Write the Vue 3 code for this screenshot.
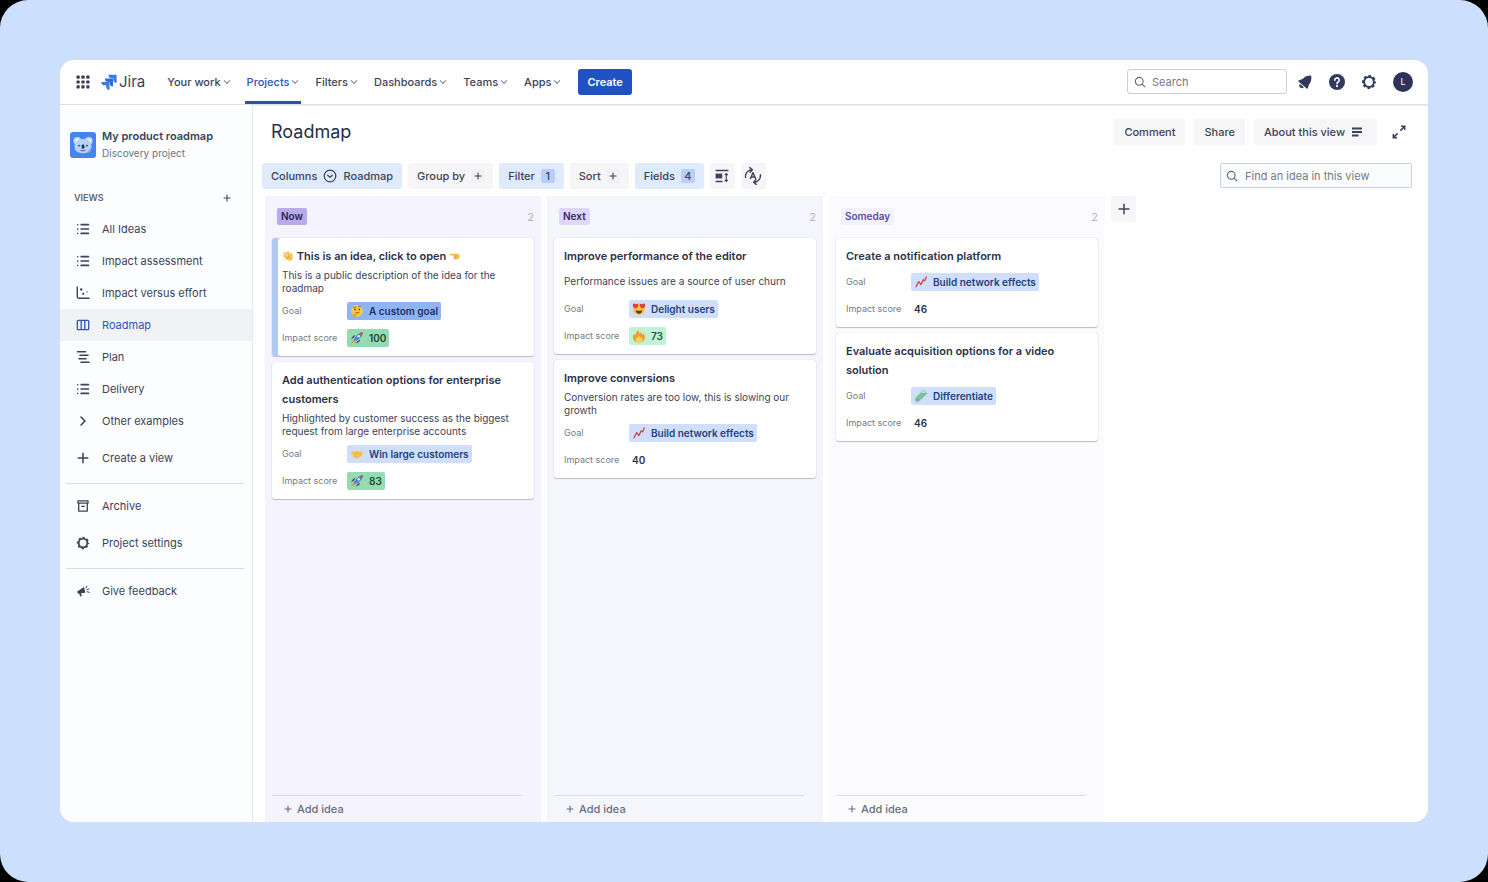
<script setup>
import { ref } from 'vue';

const search = ref('');
const ideaSearch = ref('');
const activeView = ref('Roadmap');

const navItems = ['Your work', 'Projects', 'Filters', 'Dashboards', 'Teams', 'Apps'];

const views = [
  { name: 'All Ideas', icon: 'list' },
  { name: 'Impact assessment', icon: 'list' },
  { name: 'Impact versus effort', icon: 'chart' },
  { name: 'Roadmap', icon: 'board' },
  { name: 'Plan', icon: 'plan' },
  { name: 'Delivery', icon: 'list' },
  { name: 'Other examples', icon: 'right' },
];

const columns = ref([
  {
    name: 'Now',
    tone: 'now',
    ideas: [
      {
        title: 'This is an idea, click to open',
        before: 'wave',
        after: 'point',
        selected: true,
        text: 'This is a public description of the idea for the roadmap',
        long: true,
        goal: { icon: 'think', name: 'A custom goal', tone: 'strong' },
        score: { icon: 'rocket', value: 100, tone: 'green' },
      },
      {
        title: 'Add authentication options for enterprise customers',
        text: 'Highlighted by customer success as the biggest request from large enterprise accounts',
        long: true,
        goal: { icon: 'shake', name: 'Win large customers', tone: 'blue' },
        score: { icon: 'rocket', value: 83, tone: 'green' },
      },
    ],
  },
  {
    name: 'Next',
    tone: 'next',
    ideas: [
      {
        title: 'Improve performance of the editor',
        text: 'Performance issues are a source of user churn',
        goal: { icon: 'love', name: 'Delight users', tone: 'blue' },
        score: { icon: 'fire', value: 73, tone: 'mint' },
      },
      {
        title: 'Improve conversions',
        text: 'Conversion rates are too low, this is slowing our growth',
        long: true,
        goal: { icon: 'trend', name: 'Build network effects', tone: 'blue' },
        score: { value: 40, tone: 'plain' },
      },
    ],
  },
  {
    name: 'Someday',
    tone: 'someday',
    ideas: [
      {
        title: 'Create a notification platform',
        goal: { icon: 'trend', name: 'Build network effects', tone: 'blue' },
        score: { value: 46, tone: 'plain' },
      },
      {
        title: 'Evaluate acquisition options for a video solution',
        goal: { icon: 'tube', name: 'Differentiate', tone: 'blue' },
        score: { value: 46, tone: 'plain' },
      },
    ],
  },
]);
</script>

<template>
  <div class="page">
    <!-- Icons shared by the whole page -->
    <svg class="sprite" aria-hidden="true">
      <symbol id="apps" viewBox="0 0 14 14">
        <g fill="#343b52">
          <rect x="0.5" y="0.5" width="3.2" height="3.2" rx="0.8" /><rect x="5.4" y="0.5" width="3.2" height="3.2" rx="0.8" /><rect x="10.3" y="0.5" width="3.2" height="3.2" rx="0.8" />
          <rect x="0.5" y="5.4" width="3.2" height="3.2" rx="0.8" /><rect x="5.4" y="5.4" width="3.2" height="3.2" rx="0.8" /><rect x="10.3" y="5.4" width="3.2" height="3.2" rx="0.8" />
          <rect x="0.5" y="10.3" width="3.2" height="3.2" rx="0.8" /><rect x="5.4" y="10.3" width="3.2" height="3.2" rx="0.8" /><rect x="10.3" y="10.3" width="3.2" height="3.2" rx="0.8" />
        </g>
      </symbol>
      <symbol id="jira" viewBox="0 0 16 16">
        <path fill="#3a7bea" d="M7.4 0.8h8.2v8.2a3.4 3.4 0 0 1-3.3-3.4V4.3h-1.5A3.4 3.4 0 0 1 7.4 0.8z" />
        <path fill="#2f6bd8" d="M3.9 4.4H12v8.1a3.4 3.4 0 0 1-3.3-3.4V7.9H7.3a3.4 3.4 0 0 1-3.4-3.5z" />
        <path fill="#3a7bea" d="M0.3 7.9h8.2v8a3.4 3.4 0 0 1-3.3-3.4v-1.2H3.7A3.4 3.4 0 0 1 0.3 7.9z" />
      </symbol>
      <symbol id="down" viewBox="0 0 8 8">
        <path d="M1.4 2.7 4 5.3l2.6-2.6" fill="none" stroke="currentColor" stroke-width="1.2" stroke-linecap="round" stroke-linejoin="round" />
      </symbol>
      <symbol id="right" viewBox="0 0 14 14">
        <path d="m5 3 4 4-4 4" fill="none" stroke="currentColor" stroke-width="1.6" stroke-linecap="round" stroke-linejoin="round" />
      </symbol>
      <symbol id="plus" viewBox="0 0 14 14">
        <path d="M7 2.2v9.6M2.2 7h9.6" fill="none" stroke="currentColor" stroke-width="1.5" stroke-linecap="round" />
      </symbol>
      <symbol id="smallplus" viewBox="0 0 8 8">
        <path d="M4 1v6M1 4h6" fill="none" stroke="currentColor" stroke-width="1.1" stroke-linecap="round" />
      </symbol>
      <symbol id="magnifier" viewBox="0 0 12 12">
        <path d="M5.2 1.4a3.9 3.9 0 1 0 0 7.8 3.9 3.9 0 0 0 0-7.8zM8.1 8.1l2.8 2.8" fill="none" stroke="currentColor" stroke-width="1.1" stroke-linecap="round" />
      </symbol>
      <symbol id="bell" viewBox="0 0 16 16">
        <path fill="currentColor" d="M14.2 1.6c.6 3.900-.3 6.900-2.200 8.900l-1.300 3.900c-.2.500-.6.500-1 .2L1.400 7.600c-.4-.3-.3-.8.2-1L5.600 5c2-2.400 5-3.500 8.600-3.400z" />
        <path fill="currentColor" d="m2.900 9.900 4 3.300a2.500 2.500 0 0 1-4-3.300z" />
      </symbol>
      <symbol id="help" viewBox="0 0 16 16">
        <circle cx="8" cy="8" r="8" fill="currentColor" />
        <path d="M5.800 6.300a2.200 2.200 0 1 1 3.400 1.700C8.400 8.500 8 8.900 8 9.700" fill="none" stroke="#fff" stroke-width="1.600" stroke-linecap="round" />
        <circle cx="8" cy="12.200" r="1.100" fill="#fff" />
      </symbol>
      <symbol id="gear" viewBox="0 0 16 16">
        <circle cx="8" cy="8" r="4.900" fill="none" stroke="currentColor" stroke-width="2" />
        <circle cx="8" cy="8" r="6.200" fill="none" stroke="currentColor" stroke-width="1.700" stroke-dasharray="2.700 2.169" stroke-dashoffset="1.350" />
      </symbol>
      <symbol id="list" viewBox="0 0 14 14">
        <path d="M1 2.600h1.400M1 7h1.400M1 11.400h1.400" stroke="currentColor" stroke-width="1.400" />
        <path d="M5.200 2.600h7.200M5.200 7h7.200M5.200 11.400h7.200" stroke="currentColor" stroke-width="1.700" stroke-linecap="round" />
      </symbol>
      <symbol id="chart" viewBox="0 0 14 14">
        <path d="M1.300 1v9.500a1.800 1.800 0 0 0 1.800 1.800H13" fill="none" stroke="currentColor" stroke-width="1.400" stroke-linecap="round" />
        <circle cx="5.200" cy="3.400" r="1.200" fill="currentColor" /><circle cx="7.300" cy="7.800" r="1.100" fill="currentColor" /><circle cx="11" cy="5.900" r="0.700" fill="currentColor" />
      </symbol>
      <symbol id="board" viewBox="0 0 14 14">
        <path d="M2.300 2.300h9.400a1 1 0 0 1 1 1v7.400a1 1 0 0 1-1 1H2.300a1 1 0 0 1-1-1V3.300a1 1 0 0 1 1-1zM5.200 2.300v9.400M8.800 2.300v9.400" fill="none" stroke="currentColor" stroke-width="1.300" />
      </symbol>
      <symbol id="plan" viewBox="0 0 14 14">
        <path d="M1.500 1.700h8M4 5.200h8M3 8.700h7M5 12.200h8" stroke="currentColor" stroke-width="1.600" stroke-linecap="round" />
      </symbol>
      <symbol id="archive" viewBox="0 0 14 14">
        <path d="M2 1.900h10v2.300H2zM2.700 4.200v7.900h8.600V4.200M5.300 7.400h3.400" fill="none" stroke="currentColor" stroke-width="1.300" stroke-linejoin="round" />
      </symbol>
      <symbol id="megaphone" viewBox="0 0 14 14">
        <path fill="currentColor" d="M1.200 7.400 8 3l1.300 5.800-4.300.4.900 2.900-1.500.4L3 9.400l-1.300.1z" />
        <path d="m10 4 .9-1.800M11 5.800l2-.9M11.200 7.800l2 .5" stroke="currentColor" stroke-width="1" stroke-linecap="round" />
      </symbol>
      <symbol id="circledown" viewBox="0 0 14 14">
        <circle cx="7" cy="7" r="5.800" fill="none" stroke="currentColor" stroke-width="1.200" />
        <path d="m4.700 6.200 2.300 2.200 2.300-2.200" fill="none" stroke="currentColor" stroke-width="1.200" stroke-linecap="round" stroke-linejoin="round" />
      </symbol>
      <symbol id="rows" viewBox="0 0 14 14">
        <path d="M0.600 1.500h12.800M0.600 12.500h7" stroke="currentColor" stroke-width="1.500" />
        <rect x="0.600" y="4.600" width="6.600" height="4.800" fill="currentColor" />
        <path d="M11.300 4.800v7M9.800 6.200l1.500-1.700 1.500 1.700M9.800 10.800l1.500 1.700 1.500-1.700" fill="none" stroke="currentColor" stroke-width="1.100" />
      </symbol>
      <symbol id="autosort" viewBox="0 0 18 18">
        <path d="M1.600 10.400A6.500 6.500 0 0 1 8 2.800M5.800 0.600 8.400 2.800 6.200 5.200M16.400 7.600A6.500 6.500 0 0 1 10 15.200M12.200 17.400 9.600 15.200l2.200-2.400" fill="none" stroke="currentColor" stroke-width="1.400" stroke-linecap="round" stroke-linejoin="round" />
        <path d="M6.200 12 9 5.600l2.800 6.400M7.200 10h3.600" fill="none" stroke="currentColor" stroke-width="1.400" stroke-linejoin="round" />
      </symbol>
      <symbol id="lines" viewBox="0 0 12 12">
        <path d="M1 2.500h10M1 6h10M1 9.500h6.500" stroke="currentColor" stroke-width="1.800" />
      </symbol>
      <symbol id="expand" viewBox="0 0 14 14">
        <path d="M8.400 5.600 12.400 1.600M9 1.300h3.700V5M5.600 8.400 1.600 12.400M1.300 9v3.700H5" fill="none" stroke="currentColor" stroke-width="1.500" />
      </symbol>
      <symbol id="koala" viewBox="0 0 26 26">
        <rect width="26" height="26" rx="3" fill="#4683ec" />
        <circle cx="7.300" cy="8.800" r="3.900" fill="#c5dcfb" /><circle cx="18.700" cy="8.800" r="3.900" fill="#c5dcfb" />
        <circle cx="7.300" cy="9" r="2" fill="#e9f2fe" /><circle cx="18.700" cy="9" r="2" fill="#e9f2fe" />
        <path d="M4.500 14.500C4.500 9.500 8 7 13 7s8.500 2.500 8.500 7.500c0 4.500-3.500 6.800-8.500 6.800s-8.500-2.300-8.500-6.800z" fill="#b4d2fa" />
        <path d="M17 21c2 0 4-1.500 4.400-4.500l-2 .5z" fill="#7fb0f5" />
        <circle cx="9" cy="13.600" r="0.900" fill="#26365e" /><circle cx="17" cy="13.600" r="0.900" fill="#26365e" />
        <rect x="11.600" y="12.400" width="2.800" height="4.400" rx="1.300" fill="#26365e" />
        <path d="M10.600 18.200c1.500.8 3.300.8 4.800 0" fill="none" stroke="#26365e" stroke-width="0.800" />
      </symbol>
      <symbol id="wave" viewBox="0 0 14 14">
        <path d="M3 4.200 6.800 9M5 2.800 8.600 7.600M7.200 2.500l2.900 4.300M2.400 6.600l3.300 3.800" stroke="#f6bf45" stroke-width="1.800" stroke-linecap="round" />
        <path d="M4.600 8.600 9.800 5.500c.3-1.600.8-2.400 1.600-2 .9.500.3 2.600.9 4.400.5 2.300-1 4.400-3 4.700-2 .3-3.600-1-4.700-4z" fill="#f6bf45" />
        <path d="m5.200 8.500 1.700 2M7 7.200l1.500 1.900" stroke="#d98f26" stroke-width="0.600" />
        <path d="M1 4.200c.2-1.200.8-2 1.800-2.500M3 12.600c-1-.4-1.600-1-2-2" fill="none" stroke="#8aa9d6" stroke-width="0.600" />
      </symbol>
      <symbol id="point" viewBox="0 0 14 14">
        <path d="M1.600 4.500h6.200c1.900-1 4.700.1 4.700 2.900 0 2.600-2 3.800-4 3.700H6.700c-1.300 0-1.600-1.300-.8-1.800-.9-.3-1-1.400-.3-1.900-.5-.2-.6-.7-.5-1H1.600c-1.300 0-1.300-1.900 0-1.900z" fill="#f5c04a" />
        <path d="M5.600 7.500h2.700M6 9.300h2.300" stroke="#d9972e" stroke-width="0.600" />
      </symbol>
      <symbol id="think" viewBox="0 0 14 14">
        <circle cx="7" cy="6.800" r="5.900" fill="#f8cb4b" />
        <ellipse cx="5" cy="5.500" rx="0.800" ry="1" fill="#5b3a1c" /><ellipse cx="9.300" cy="5.500" rx="0.800" ry="1" fill="#5b3a1c" />
        <path d="M3.500 3.600c.7-.6 1.600-.6 2.300-.2M8.300 2.800c.8-.7 1.900-.6 2.500.1M5.800 8.800c1.200-.5 2.300-.4 3.300.1" fill="none" stroke="#5b3a1c" stroke-width="0.700" stroke-linecap="round" />
        <path d="M2.700 9.600c.4-.6 1-.3 1.100.3l3.700-.8c1-.2 1.100 1 .2 1.200l-1.200.3c.3 1.500-.8 3-2.300 3-1.400 0-2-1.200-1.500-4z" fill="#eda234" />
      </symbol>
      <symbol id="rocket" viewBox="0 0 14 14">
        <path d="M3.600 7 1.200 8.200 3 5c.6-.8 1.600-1 2.500-.8zM7 10.400l-1.200 2.400L9 11c.8-.6 1-1.600.8-2.500z" fill="#3a4a86" />
        <path d="M3.800 9.200C5 5.300 8 1.700 12.800 1.200 12.300 6 8.700 9 4.800 10.200z" fill="#5b82c4" />
        <path d="M9.600 2.200c1-.5 2-.9 3.200-1-.1 1.200-.5 2.200-1 3.200z" fill="#d9433c" />
        <circle cx="8.700" cy="5.300" r="1.300" fill="#d5e8fb" />
        <path d="M3.800 9.200 1.200 12.800l3.600-2.600z" fill="#ef7d35" /><path d="m3.300 9.400-2 .8M4.600 10.700l-.8 2" stroke="#e9a640" stroke-width="0.900" />
      </symbol>
      <symbol id="shake" viewBox="0 0 14 14">
        <path d="M1 5.400 3.400 4l2.400.4h2.800L10.700 4 13 5.400 12.300 8.300 8.800 11c-1 .7-2.300.6-3.200 0L1.800 8.300z" fill="#f7c550" />
        <path d="m5 6.800 2.300-1.700L11 8.200M5 6.800c.8.600 1.500.4 2.200-.3M5.200 10.200l-.9-.8M6.900 10.700l-1-1" fill="none" stroke="#dd9c34" stroke-width="0.600" stroke-linecap="round" />
      </symbol>
      <symbol id="love" viewBox="0 0 14 14">
        <circle cx="7" cy="7.200" r="5.900" fill="#f8c443" />
        <path d="M3.600 6.600C1.400 5.500.4 4.200.8 2.700c.5-1.300 2-1.500 2.800-.4.900-1 2.400-.8 2.700.5.300 1.500-.8 2.800-2.700 3.800zM10.400 6.600c2.200-1.100 3.200-2.400 2.800-3.900-.5-1.300-2-1.500-2.800-.4-.9-1-2.400-.8-2.700.5-.3 1.500.8 2.800 2.700 3.800z" fill="#dd3f45" />
        <path d="M3.700 8.200c2 .7 4.600.7 6.600 0-.2 2.300-1.500 3.500-3.300 3.500s-3.100-1.200-3.300-3.500z" fill="#5c3321" />
      </symbol>
      <symbol id="fire" viewBox="0 0 14 14">
        <path d="M7 13.400C3.500 13.400 1 11.500 1 8.500c0-1.700.6-2.800 1.300-4 .3 1 .6 1.500 1.100 2C3.500 4.800 4.500 2 6.600.8c-.1 1.700.5 2.900 1.400 4 .4-.6.600-1.200.6-2 1.200.8 1.700 2 1.800 3.500.5-.4.800-.9 1-1.700C12.500 5.700 13 7 13 8.500c0 3-2.500 4.900-6 4.900z" fill="#f29a35" />
        <path d="M7 13.400c-2 0-3.400-1.100-3.400-2.800 0-1.200.6-2 1.200-2.700.2.700.5 1.100.9 1.400.1-1.300.7-2.400 1.700-3.200 0 1.300.6 2.100 1.200 2.900.3-.2.500-.5.600-.9.700.7 1.200 1.500 1.200 2.500 0 1.700-1.400 2.800-3.400 2.800z" fill="#fbd659" />
      </symbol>
      <symbol id="trend" viewBox="0 0 14 14">
        <path d="M2 11.800 4.700 6.600l2.200 3L9.200 4.700l1.400 1.200L12.300 2" fill="none" stroke="#cf4450" stroke-width="1.300" stroke-linejoin="round" stroke-linecap="round" />
      </symbol>
      <symbol id="tube" viewBox="0 0 14 14">
        <path d="M9.300 1.200 12.800 4.700 5.300 12.200c-1 1-2.500 1-3.500 0s-1-2.500 0-3.500z" fill="#c3e2da" stroke="#7fa9ae" stroke-width="0.600" />
        <path d="M7.200 3.900h5.700L4.900 11.800c-.8.700-2 .7-2.700 0s-.7-1.900 0-2.700z" fill="#69b887" />
        <path d="M4.600 9.600 9.400 4.800" stroke="#a9dcb9" stroke-width="1" stroke-linecap="round" />
      </symbol>
    </svg>

    <div class="frame">
      <div class="window">
        <header class="topbar">
          <button class="bare" aria-label="Switch apps"><svg class="i14"><use href="#apps" /></svg></button>
          <a class="logo" href="#"><svg class="i16"><use href="#jira" /></svg>Jira</a>
          <nav class="nav">
            <a v-for="item in navItems" :key="item" href="#" :class="{ current: item === 'Projects' }">
              {{ item }}<svg class="i8"><use href="#down" /></svg>
            </a>
          </nav>
          <button class="create">Create</button>
          <label class="field top-search">
            <svg class="i12"><use href="#magnifier" /></svg>
            <input v-model="search" type="search" placeholder="Search" aria-label="Search" />
          </label>
          <div class="tools">
            <button class="bare" aria-label="Notifications"><svg class="i16"><use href="#bell" /></svg></button>
            <button class="bare" aria-label="Help"><svg class="i16"><use href="#help" /></svg></button>
            <button class="bare" aria-label="Settings"><svg class="i16"><use href="#gear" /></svg></button>
            <button class="avatar" aria-label="Profile">L</button>
          </div>
        </header>

        <div class="body">
          <aside class="sidebar">
            <div class="project">
              <svg class="i26"><use href="#koala" /></svg>
              <div>
                <strong>My product roadmap</strong>
                <span>Discovery project</span>
              </div>
            </div>
            <div class="views-head">
              <h2>VIEWS</h2>
              <button class="bare" aria-label="Add view"><svg class="i8"><use href="#smallplus" /></svg></button>
            </div>
            <nav class="views">
              <a
                v-for="view in views"
                :key="view.name"
                href="#"
                :class="{ active: view.name === activeView }"
                @click.prevent="activeView = view.name"
              >
                <svg class="i14"><use :href="'#' + view.icon" /></svg>{{ view.name }}
              </a>
            </nav>
            <a class="side-link" href="#"><svg class="i14"><use href="#plus" /></svg>Create a view</a>
            <hr />
            <a class="side-link" href="#"><svg class="i14"><use href="#archive" /></svg>Archive</a>
            <a class="side-link" href="#"><svg class="i14"><use href="#gear" /></svg>Project settings</a>
            <hr />
            <a class="side-link" href="#"><svg class="i14"><use href="#megaphone" /></svg>Give feedback</a>
          </aside>

          <main class="main">
            <div class="title-row">
              <h1>Roadmap</h1>
              <button class="btn">Comment</button>
              <button class="btn">Share</button>
              <button class="btn about">About this view<svg class="i12"><use href="#lines" /></svg></button>
              <button class="bare expand" aria-label="Full screen"><svg class="i14"><use href="#expand" /></svg></button>
            </div>

            <div class="toolbar">
              <button class="btn on">Columns<svg class="i14"><use href="#circledown" /></svg>Roadmap</button>
              <button class="btn">Group by<span class="chip"><svg class="i8"><use href="#smallplus" /></svg></span></button>
              <button class="btn on">Filter<span class="chip">1</span></button>
              <button class="btn">Sort<span class="chip"><svg class="i8"><use href="#smallplus" /></svg></span></button>
              <button class="btn on">Fields<span class="chip">4</span></button>
              <button class="btn square" aria-label="Card size"><svg class="i14"><use href="#rows" /></svg></button>
              <button class="btn square" aria-label="Auto sort"><svg class="i18"><use href="#autosort" /></svg></button>
              <label class="field find">
                <svg class="i12"><use href="#magnifier" /></svg>
                <input v-model="ideaSearch" type="search" placeholder="Find an idea in this view" aria-label="Find an idea in this view" />
              </label>
            </div>

            <div class="board">
              <section v-for="column in columns" :key="column.name" class="column" :class="column.tone">
                <div class="column-head">
                  <h3>{{ column.name }}</h3>
                  <span>{{ column.ideas.length }}</span>
                </div>
                <article v-for="idea in column.ideas" :key="idea.title" class="card" :class="{ selected: idea.selected }">
                  <h4>
                    <svg v-if="idea.before" class="i12"><use :href="'#' + idea.before" /></svg>
                    {{ idea.title }}
                    <svg v-if="idea.after" class="i12"><use :href="'#' + idea.after" /></svg>
                  </h4>
                  <p v-if="idea.text" :class="{ long: idea.long }">{{ idea.text }}</p>
                  <div class="prop">
                    <span>Goal</span>
                    <b class="pill" :class="idea.goal.tone"><svg class="i14"><use :href="'#' + idea.goal.icon" /></svg>{{ idea.goal.name }}</b>
                  </div>
                  <div class="prop">
                    <span>Impact score</span>
                    <b class="pill" :class="idea.score.tone"><svg v-if="idea.score.icon" class="i14"><use :href="'#' + idea.score.icon" /></svg>{{ idea.score.value }}</b>
                  </div>
                </article>
                <button class="add-idea"><svg class="i8"><use href="#smallplus" /></svg>Add idea</button>
              </section>
              <button class="btn square" aria-label="Add column"><svg class="i14"><use href="#plus" /></svg></button>
            </div>
          </main>
        </div>
      </div>
    </div>
  </div>
</template>

<style>
body {
  margin: 0;
  background: #000;
}
</style>

<style scoped>
* {
  box-sizing: border-box;
}

.page {
  font-family: Inter, "Liberation Sans", sans-serif;
  font-size: 11px;
  color: #3c4358;
  background: #000;
}

.sprite {
  position: absolute;
  width: 0;
  height: 0;
}

.frame {
  display: flex;
  min-height: 100vh;
  padding: 60px;
  background: #ccdffd;
  border-radius: 28px;
}

.window {
  flex: 1;
  min-width: 0;
  display: flex;
  flex-direction: column;
  background: #fefefe;
  border-radius: 14px;
  overflow: hidden;
}

h1, h2, h3, h4, p {
  margin: 0;
}

a {
  color: inherit;
  text-decoration: none;
}

button, input {
  font: inherit;
  color: inherit;
  border: none;
  background: none;
  padding: 0;
}

button {
  cursor: pointer;
}

svg {
  flex: none;
  display: block;
}

.i8 { width: 8px; height: 8px; }
.i12 { width: 12px; height: 12px; }
.i14 { width: 14px; height: 14px; }
.i16 { width: 16px; height: 16px; }
.i18 { width: 18px; height: 18px; }
.i26 { width: 26px; height: 26px; }

/* Top bar */
.topbar {
  display: flex;
  align-items: center;
  height: 45px;
  padding: 0 15px 1px 16px;
  border-bottom: 1px solid #dcdfe3;
  box-shadow: 0 1px 1px #eef0f2;
}

.logo {
  display: flex;
  align-items: center;
  gap: 2px;
  margin: 0 20px 0 11px;
  font-size: 15px;
}

.nav {
  display: flex;
  align-self: stretch;
  gap: 12px;
}

.nav a {
  display: flex;
  align-items: center;
  gap: 2px;
  height: 44px;
  padding: 3px 2px 0;
  border-bottom: 3px solid transparent;
  font-weight: 500;
  white-space: nowrap;
}

.nav svg {
  color: #8b90a0;
}

.nav .current {
  color: #2c55b8;
  border-color: #2c50ad;
}

.create {
  height: 26px;
  margin-left: 15px;
  padding: 0 9px;
  border-radius: 3px;
  background: #2152c4;
  color: #fff;
  font-weight: 600;
}

.field {
  display: flex;
  align-items: center;
  height: 25px;
  border: 1px solid #cdd0d6;
  color: #5f6675;
}

.field input {
  flex: 1;
  min-width: 0;
  outline: none;
}

.field input::placeholder {
  color: #747a87;
  opacity: 1;
}

.top-search {
  width: 160px;
  margin-left: auto;
  padding: 0 6px;
  gap: 6px;
  border-radius: 3px;
}

.tools {
  display: flex;
  align-items: center;
  gap: 16px;
  margin-left: 10px;
  color: #303a5c;
}

.avatar {
  width: 20px;
  height: 20px;
  border-radius: 50%;
  background: #2c3557;
  color: #fff;
  font-size: 9px;
}

.body {
  flex: 1;
  display: flex;
}

/* Sidebar */
.sidebar {
  flex: none;
  width: 193px;
  background: #fbfdfe;
  border-right: 1px solid #e6e8eb;
}

.project {
  display: flex;
  gap: 6px;
  align-items: center;
  padding: 23px 10px 0;
}

.project strong, .project span {
  display: block;
  line-height: 17px;
}

.project strong {
  font-weight: 600;
}

.project span {
  font-size: 10px;
  color: #6e7480;
}

.views-head {
  display: flex;
  align-items: center;
  justify-content: space-between;
  height: 31px;
  margin-top: 20px;
  padding: 0 21px 0 14px;
}

.views-head h2 {
  font-size: 9px;
  font-weight: 600;
  color: #5f6675;
}

.views {
  margin-bottom: 2px;
}

.views a, .side-link {
  display: flex;
  align-items: center;
  gap: 12px;
  height: 32px;
  padding-left: 16px;
}

.side-link {
  height: 37px;
}

.views .active {
  background: #f1f2f4;
  color: #2c55b8;
}

hr {
  height: 1px;
  margin: 7px 8px 3px 6px;
  border: none;
  background: #d9dce0;
}

/* Main area */
.main {
  flex: 1;
  min-width: 0;
  display: flex;
  flex-direction: column;
}

.title-row {
  display: flex;
  align-items: center;
  gap: 9px;
  padding: 14px 22px 0 18px;
}

h1 {
  margin-right: auto;
  font-size: 18px;
  font-weight: 400;
  line-height: 26px;
  color: #272e48;
}

.btn {
  display: flex;
  align-items: center;
  gap: 6px;
  height: 26px;
  padding: 0 9px;
  border-radius: 3px;
  background: #f6f6f8;
  font-weight: 500;
  white-space: nowrap;
}

.title-row .btn {
  padding: 0 10px;
}

.title-row .about {
  padding-right: 14px;
}

.expand {
  margin-left: 6px;
}

.toolbar {
  display: flex;
  gap: 6px;
  padding: 18px 16px 0 9px;
}

.btn.on {
  background: #dfeafd;
}

.chip {
  display: flex;
  align-items: center;
  justify-content: center;
  width: 13px;
  height: 14px;
  border-radius: 2px;
  background: #f1f1f3;
}

.on .chip {
  width: 14px;
  background: #b9cffa;
}

.btn.square {
  justify-content: center;
  width: 25px;
  padding: 0;
}

.find {
  width: 192px;
  margin-left: auto;
  padding: 0 5px;
  gap: 7px;
  border-radius: 2px;
  background: #fbfcfe;
}

.board {
  flex: 1;
  display: flex;
  gap: 6px;
  padding: 7px 12px 0;
}

.column {
  flex: 0 1 276px;
  display: flex;
  flex-direction: column;
  gap: 6px;
  padding: 0 7px;
}

.now { background: #f5f3fe; }
.next { background: #f5f5fc; }
.someday { background: #fbfbfe; }

.column-head {
  display: flex;
  align-items: center;
  justify-content: space-between;
  height: 36px;
  padding: 5px 0 0 5px;
  color: #b0b3bd;
}

.column-head h3 {
  padding: 0 4px;
  border-radius: 2px;
  font-size: 10px;
  font-weight: 600;
  line-height: 17px;
}

.now h3 { background: #b9abe8; color: #2b2457; }
.next h3 { background: #ded7fb; color: #2f2a5e; }
.someday h3 { background: #f3f1fe; color: #5a4ba8; }

.card {
  padding: 9px 10px 5px;
  border-radius: 3px;
  background: #fff;
  box-shadow: 0 1px 1px #b9bbc8, 0 0 1px #b9bbc8;
}

.card.selected {
  box-shadow: inset 6px 0 #b0caf5, 0 1px 1px #b9bbc8, 0 0 1px #b9bbc8;
}

.card h4 {
  margin-bottom: 2px;
  font-size: 11px;
  font-weight: 600;
  line-height: 19px;
  color: #2b3149;
}

.card h4 svg {
  display: inline-block;
  vertical-align: -2px;
}

.card p {
  font-size: 10px;
  line-height: 27px;
  color: #3c4358;
}

.card p.long {
  padding: 1px 0 2px;
  line-height: 13px;
}

.prop {
  display: flex;
  align-items: center;
  height: 27px;
}

.prop span {
  width: 65px;
  font-size: 9px;
  color: #757a86;
}

.pill {
  display: flex;
  align-items: center;
  gap: 5px;
  height: 18px;
  padding: 0 3px;
  border-radius: 2px;
  font-size: 10px;
  font-weight: 600;
}

.strong { background: #8fb4f4; color: #1b2f63; }
.blue { background: #cfdefb; color: #24407e; }
.green { background: #94dbb2; color: #1d4a37; }
.mint { background: #c3f1d6; color: #28543f; }
.plain { color: #2b3149; }

.add-idea {
  display: flex;
  align-items: center;
  gap: 5px;
  height: 27px;
  margin: auto 12px 0 0;
  padding-left: 12px;
  border-top: 1px solid #dcdde6;
  color: #676d7b;
  font-weight: 500;
}
</style>
